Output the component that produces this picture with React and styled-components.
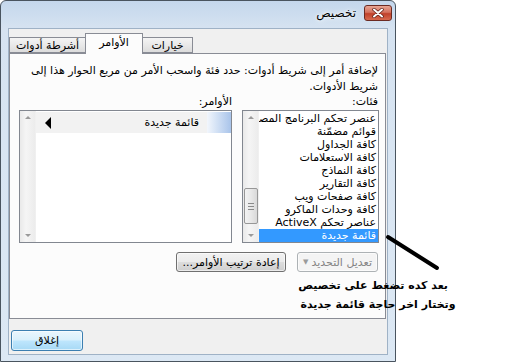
import React from "react";
import styled, { createGlobalStyle } from "styled-components";

const GlobalStyle = createGlobalStyle`
  html, body {
    margin: 0;
    padding: 0;
    background: #ffffff;
  }
  body {
    font-family: "DejaVu Sans", sans-serif;
    font-size: 11px;
    color: #000;
  }
`;

const Page = styled.div`
  position: relative;
  width: 509px;
  height: 362px;
  overflow: hidden;
  background: #ffffff;
`;

const Window = styled.div`
  box-sizing: border-box;
  width: 396px;
  height: 362px;
  display: flex;
  flex-direction: column;
  border: 1px solid #49545f;
  border-radius: 6px 6px 0 0;
  background: linear-gradient(180deg, #c4d7ec 0px, #d6e3f1 28px, #dce8f4 100%);
`;

const TitleBar = styled.div`
  height: 27px;
  display: flex;
  align-items: center;
  justify-content: flex-end;
  gap: 8px;
  padding: 0 3px 3px 0;
  box-sizing: border-box;
  direction: ltr;
`;

const Title = styled.span`
  font-size: 12px;
  color: #000;
  direction: rtl;
  text-shadow: 0 0 6px #ffffff, 0 0 3px #ffffff;
`;

const CloseBox = styled.div`
  box-sizing: border-box;
  width: 28px;
  height: 16px;
  border: 1px solid #6b2a22;
  border-radius: 3px;
  background: linear-gradient(180deg, #e8a593 0%, #d4725f 45%, #c0412b 55%, #d76a4f 100%);
  display: flex;
  align-items: center;
  justify-content: center;
`;

const Client = styled.div`
  flex: 1;
  box-sizing: border-box;
  margin: 0 7px 6px 7px;
  border: 1px solid #9fb2c6;
  background: #f0f0f0;
  padding: 4px 0 0 0;
  display: flex;
  flex-direction: column;
`;

const TabRow = styled.div`
  display: flex;
  align-items: flex-end;
  height: 20px;
  position: relative;
  z-index: 1;
`;

const Tab = styled.div`
  box-sizing: border-box;
  width: ${(p) => p.$w}px;
  height: ${(p) => (p.$active ? 21 : 16)}px;
  margin-bottom: ${(p) => (p.$active ? -1 : 0)}px;
  border: 1px solid #898c95;
  border-bottom: ${(p) => (p.$active ? "none" : "1px solid #898c95")};
  margin-left: ${(p) => (p.$first ? 0 : -1)}px;
  background: ${(p) =>
    p.$active ? "#fcfcfc" : "linear-gradient(180deg, #f4f4f4 0%, #e9e9e9 50%, #dcdcdc 100%)"};
  display: flex;
  align-items: center;
  justify-content: center;
  direction: rtl;
  white-space: nowrap;
  font-size: 11px;
  padding-bottom: ${(p) => (p.$active ? 4 : 0)}px;
`;

const Panel = styled.div`
  box-sizing: border-box;
  width: 377px;
  height: 266px;
  border: 1px solid #898c95;
  background: #fcfcfc;
  padding: 9px 6px 0 9px;
  display: flex;
  flex-direction: column;
`;

const Description = styled.div`
  direction: rtl;
  text-align: right;
  line-height: 16px;
  height: 32px;
  padding-right: 1px;
  white-space: nowrap;
`;

const ListsRow = styled.div`
  display: flex;
  gap: 10px;
  margin-top: 1px;
`;

const Column = styled.div`
  display: flex;
  flex-direction: column;
  width: ${(p) => p.$w}px;
`;

const Label = styled.div`
  direction: rtl;
  text-align: right;
  height: 13px;
  line-height: 12px;
  margin-bottom: 1px;
  padding-right: ${(p) => p.$pr || 0}px;
`;

const ListBox = styled.div`
  box-sizing: border-box;
  height: 133px;
  border: 1px solid #828790;
  background: #ffffff;
  display: flex;
  direction: ltr;
  overflow: hidden;
`;

const ScrollBar = styled.div`
  width: 16px;
  flex: none;
  position: relative;
  background: linear-gradient(90deg, #e9e9e9 0%, #f5f5f5 40%, #ececec 100%);
  border-right: 1px solid #f0f0f0;
  display: flex;
  flex-direction: column;
  justify-content: space-between;
  align-items: center;
  padding: 5px 0;
  box-sizing: border-box;
`;

const Arrow = styled.div`
  width: 0;
  height: 0;
  border-left: 3px solid transparent;
  border-right: 3px solid transparent;
  ${(p) =>
    p.$down
      ? "border-top: 3px solid #9a9a9a;"
      : "border-bottom: 3px solid #9a9a9a;"}
`;

const Thumb = styled.div`
  position: absolute;
  left: 1px;
  top: ${(p) => p.$top}px;
  width: 14px;
  height: ${(p) => p.$h}px;
  box-sizing: border-box;
  border: 1px solid #979797;
  border-radius: 2px;
  background: linear-gradient(90deg, #f3f3f3 0%, #e8e8e8 50%, #d9d9d9 100%);
  display: flex;
  flex-direction: column;
  align-items: center;
  justify-content: center;
  gap: 2px;
`;

const Grip = styled.div`
  width: 6px;
  height: 1px;
  background: #8a8a8a;
`;

const Items = styled.div`
  flex: 1;
  min-width: 0;
  display: flex;
  flex-direction: column;
  padding-top: ${(p) => p.$pt || 0}px;
`;

const CommandRow = styled.div`
  height: 21px;
  display: flex;
  align-items: center;
  background: #f2f2f2;
  direction: ltr;
`;

const Pointer = styled.div`
  width: 0;
  height: 0;
  margin-left: 9px;
  border-top: 6px solid transparent;
  border-bottom: 6px solid transparent;
  border-right: 6px solid #000;
`;

const CommandText = styled.div`
  flex: 1;
  direction: rtl;
  text-align: right;
  padding-right: 8px;
`;

const Swatch = styled.div`
  width: 24px;
  height: 21px;
  background: linear-gradient(90deg, #f2f6fc 0%, #d4e2f5 40%, #a9c4ea 100%);
`;

const Item = styled.div`
  height: 13px;
  line-height: 13px;
  direction: rtl;
  text-align: right;
  padding-right: 2px;
  white-space: nowrap;
  overflow: hidden;
  background: ${(p) => (p.$sel ? "#3399ff" : "transparent")};
  color: ${(p) => (p.$sel ? "#ffffff" : "#000")};
`;

const ButtonRow = styled.div`
  display: flex;
  justify-content: flex-end;
  gap: 11px;
  margin-top: 9px;
  padding-right: 1px;
`;

const Button = styled.div`
  box-sizing: border-box;
  width: ${(p) => p.$w}px;
  height: ${(p) => p.$h || 20}px;
  border: 1px solid ${(p) => (p.$disabled ? "#adb2b5" : p.$default ? "#3c7fb1" : "#707070")};
  border-radius: 3px;
  background: ${(p) =>
    p.$disabled
      ? "#f4f4f4"
      : p.$default
      ? "linear-gradient(180deg, #eaf6fd 0%, #d9f0fc 48%, #bee6fd 52%, #a7d9f5 100%)"
      : "linear-gradient(180deg, #f2f2f2 0%, #ebebeb 48%, #dddddd 52%, #cfcfcf 100%)"};
  color: ${(p) => (p.$disabled ? "#838383" : "#000")};
  display: flex;
  align-items: center;
  justify-content: center;
  gap: 3px;
  direction: rtl;
  white-space: nowrap;
  box-shadow: inset 0 0 0 1px rgba(255, 255, 255, 0.6);
`;

const SmallCaret = styled.span`
  font-size: 7px;
  color: #9a9a9a;
`;

const Footer = styled.div`
  margin-top: 11px;
  padding-left: 2px;
  display: flex;
`;

const Note = styled.div`
  position: absolute;
  left: 298px;
  top: 276px;
  width: 160px;
  display: flex;
  flex-direction: column;
  align-items: center;
  font-family: "DejaVu Sans", sans-serif;
  font-weight: bold;
  font-size: 11px;
  color: #000;
`;

const NoteRow = styled.div`
  width: ${(p) => (p.$w ? `${p.$w}px` : "auto")};
  height: 19px;
  line-height: 19px;
  direction: rtl;
  white-space: nowrap;
  text-align: justify;
  text-align-last: justify;
`;

const NoteLine = styled.svg`
  position: absolute;
  left: 380px;
  top: 230px;
`;

export default function App() {
  const categories = [
    "عنصر تحكم البرنامج المصمم",
    "قوائم مضمّنة",
    "كافة الجداول",
    "كافة الاستعلامات",
    "كافة النماذج",
    "كافة التقارير",
    "كافة صفحات ويب",
    "كافة وحدات الماكرو",
    "عناصر تحكم ActiveX",
    "قائمة جديدة",
  ];

  return (
    <>
      <GlobalStyle />
      <Page>
        <Window>
          <TitleBar>
            <Title>تخصيص</Title>
            <CloseBox>
              <svg width="12" height="10" viewBox="0 0 12 10">
                <path d="M2 1.5 L10 8.5 M10 1.5 L2 8.5" stroke="#5a1d15" strokeWidth="3.4" strokeLinecap="round" />
                <path d="M2 1.5 L10 8.5 M10 1.5 L2 8.5" stroke="#ffffff" strokeWidth="2" strokeLinecap="round" />
              </svg>
            </CloseBox>
          </TitleBar>
          <Client>
            <TabRow>
              <Tab $w={77} $first>
                أشرطة أدوات
              </Tab>
              <Tab $w={58} $active>
                الأوامر
              </Tab>
              <Tab $w={51}>خيارات</Tab>
            </TabRow>
            <Panel>
              <Description>
                لإضافة أمر إلى شريط أدوات: حدد فئة واسحب الأمر من مربع الحوار هذا إلى
                <br />
                شريط الأدوات.
              </Description>
              <ListsRow>
                <Column $w={213}>
                  <Label>الأوامر:</Label>
                  <ListBox>
                    <ScrollBar>
                      <Arrow />
                      <Arrow $down />
                    </ScrollBar>
                    <Items $pt={1}>
                      <CommandRow>
                        <Pointer />
                        <CommandText>قائمة جديدة</CommandText>
                        <Swatch />
                      </CommandRow>
                    </Items>
                  </ListBox>
                </Column>
                <Column $w={137}>
                  <Label $pr={1}>فئات:</Label>
                  <ListBox>
                    <ScrollBar>
                      <Arrow />
                      <Thumb $top={77} $h={36}>
                        <Grip />
                        <Grip />
                        <Grip />
                      </Thumb>
                      <Arrow $down />
                    </ScrollBar>
                    <Items $pt={1}>
                      {categories.map((c, i) => (
                        <Item key={c} $sel={i === categories.length - 1}>
                          {c}
                        </Item>
                      ))}
                    </Items>
                  </ListBox>
                </Column>
              </ListsRow>
              <ButtonRow>
                <Button $w={110}>إعادة ترتيب الأوامر...</Button>
                <Button $w={81} $disabled>
                  <span>تعديل التحديد</span>
                  <SmallCaret>▼</SmallCaret>
                </Button>
              </ButtonRow>
            </Panel>
            <Footer>
              <Button $w={72} $h={21} $default>
                إغلاق
              </Button>
            </Footer>
          </Client>
        </Window>
        <NoteLine width="70" height="45" viewBox="0 0 70 45">
          <line x1="8" y1="7" x2="57" y2="38" stroke="#000" strokeWidth="4" strokeLinecap="round" />
        </NoteLine>
        <Note>
          <NoteRow $w={140}>بعد كده تضغط على تخصيص</NoteRow>
          <NoteRow>وتختار اخر حاجة قائمة جديدة</NoteRow>
        </Note>
      </Page>
    </>
  );
}
